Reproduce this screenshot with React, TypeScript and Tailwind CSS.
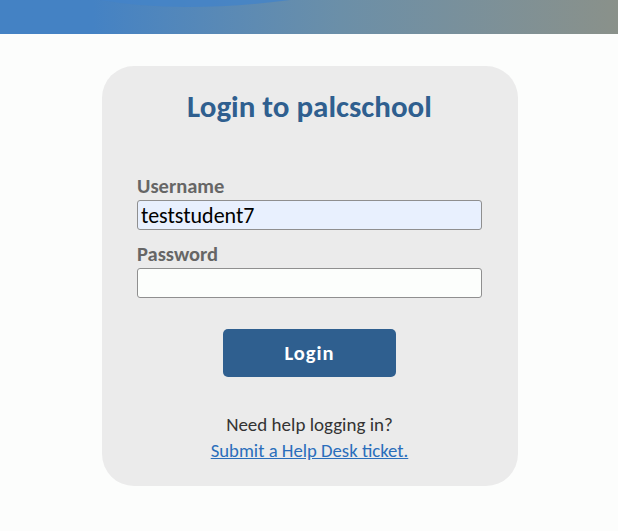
export default function App() {
  return (
    <div
      className="min-h-[531px] w-full bg-[#fcfdfc]"
      style={{ fontFamily: "Carlito, Calibri, Lato, 'Open Sans', sans-serif" }}
    >
      <div className="relative h-[34px] w-full overflow-hidden bg-gradient-to-r from-[#4482c4] from-15% via-[#6b8fa8] via-55% to-[#8a918a]">
        <svg className="absolute left-0 top-0" width="618" height="34" viewBox="0 0 618 34">
          <path d="M100 0 Q180 14 290 0 Z" fill="#4383c8" opacity="0.8" />
        </svg>
      </div>

      <div className="flex justify-center pl-[2px] pt-[32px]">
        <div className="flex h-[420px] w-[416px] flex-col rounded-[32px] bg-[#ebebeb] pl-[35px] pr-[36px]">
          <h1 className="mt-[20px] text-center text-[31px] font-bold leading-[40px] text-[#2f5f8f]">
            Login to palcschool
          </h1>

          <label className="mt-[48px] text-[20.5px] font-bold leading-[24px] text-[#666666]">Username</label>
          <div className="mt-[2px] flex h-[30px] items-center rounded-[3px] border border-[#8f8f8f] bg-[#e8f0fe] px-[3px] text-[22px] text-black">
            teststudent7
          </div>

          <label className="mt-[12px] text-[20.5px] font-bold leading-[24px] text-[#666666]">Password</label>
          <div className="mt-[2px] h-[30px] rounded-[3px] border border-[#8f8f8f] bg-[#fcfefc]" />

          <div className="mt-[31px] flex justify-center">
            <button className="h-[48px] w-[173px] rounded-[5px] bg-[#2f5f8f] text-[20.5px] font-bold tracking-[1px] text-white">
              Login
            </button>
          </div>

          <p className="mt-[35px] text-center text-[19px] leading-[26px] text-[#333333]">Need help logging in?</p>
          <a href="#" className="text-center text-[18.7px] leading-[26px] text-[#2a6ebb] underline">
            Submit a Help Desk ticket.
          </a>
        </div>
      </div>
    </div>
  )
}
